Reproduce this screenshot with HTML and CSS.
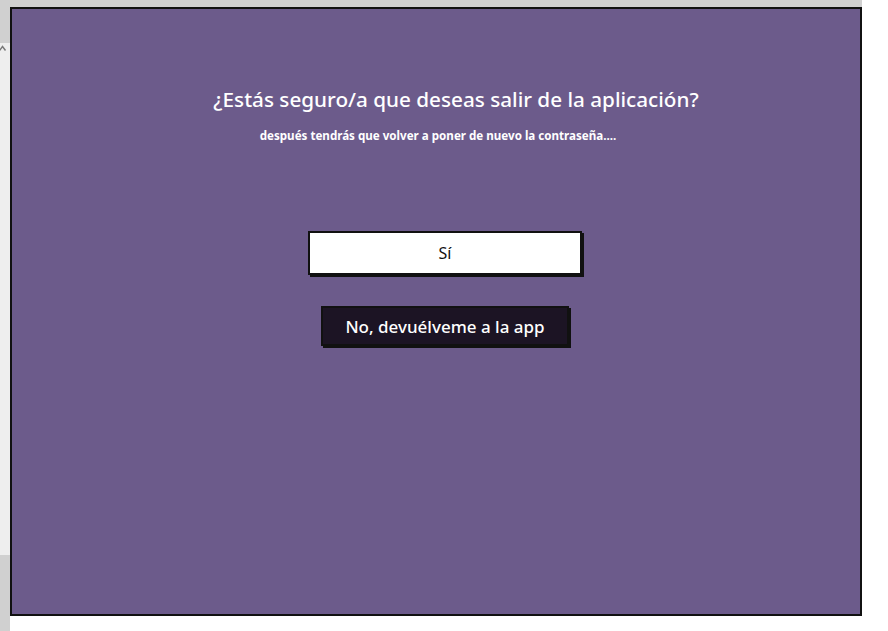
FILE: index.html
```html
<!DOCTYPE html>
<html lang="es">
<head>
<meta charset="utf-8">
<title>Salir</title>
<link rel="stylesheet" href="styles.css">
</head>
<body>
<div class="page">
  <div class="side">
    <svg class="side-icon" width="8" height="8" viewBox="0 0 8 8"><path d="M0.5 5.5 L3.5 1.5 L6.5 5.5" fill="none" stroke="#777" stroke-width="1.4"/></svg>
  </div>
  <div class="main">
    <div class="topbar"></div>
    <div class="panel">
      <h1 class="title">¿Estás seguro/a que deseas salir de la aplicación?</h1>
      <p class="subtitle">después tendrás que volver a poner de nuevo la contraseña....</p>
      <div class="actions">
        <button class="btn btn-yes">Sí</button>
        <button class="btn btn-no">No, devuélveme a la app</button>
      </div>
    </div>
  </div>
  <div class="right"></div>
</div>
</body>
</html>
```
FILE: styles.css
```css
html, body {
  margin: 0;
  padding: 0;
  background: #ffffff;
}
body {
  font-family: "Noto Sans", "Lato", sans-serif;
  width: 888px;
  height: 631px;
  overflow: hidden;
}
.page {
  display: flex;
  height: 631px;
}
.side {
  width: 10px;
  height: 631px;
  background: linear-gradient(#d0d0d0 0 43px, #eeeeee 43px 555px, #d0d0d0 555px);
  position: relative;
}
.side-icon {
  position: absolute;
  left: -1px;
  top: 45px;
}
.main {
  width: 852px;
  display: flex;
  flex-direction: column;
}
.topbar {
  height: 7px;
  background: #d0d0d0;
}
.panel {
  box-sizing: border-box;
  height: 609px;
  border: 2px solid #111;
  background: #6c5b8b;
  display: flex;
  flex-direction: column;
  align-items: center;
  padding-top: 77px;
}
.title {
  margin: 0 0 0 40px;
  color: #ffffff;
  font-size: 20.7px;
  font-weight: 500;
  line-height: 26px;
}
.subtitle {
  margin: 16px 0 0 4px;
  color: #ffffff;
  font-size: 11.6px;
  font-weight: 700;
  line-height: 16px;
}
.actions {
  margin-top: 87px;
  margin-left: 18px;
  display: flex;
  flex-direction: column;
  align-items: center;
  gap: 31px;
}
.btn {
  box-sizing: border-box;
  font-family: inherit;
  border: 2px solid #111;
  box-shadow: 2px 2px 0 #111;
  padding: 0;
  cursor: pointer;
}
.btn-yes {
  width: 274px;
  height: 44px;
  background: #ffffff;
  color: #111;
  font-size: 16px;
}
.btn-no {
  width: 248px;
  height: 40px;
  background: #1c1424;
  color: #ffffff;
  font-size: 17px;
  font-weight: 500;
}
.right {
  flex: 1;
  background: #ffffff;
}
```
